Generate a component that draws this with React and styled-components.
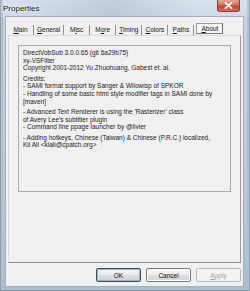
import React from 'react'
import styled, { createGlobalStyle } from 'styled-components';

const GlobalStyle = createGlobalStyle`
  body {
    margin: 0;
    font-family: "Liberation Sans", Arial, sans-serif;
  }
`

const tabs = [
	{ label: 'Main', key: 'M', rest: 'ain' },
	{ label: 'General', key: 'G', rest: 'eneral' },
	{ label: 'Misc', pre: 'M', key: 'i', rest: 'sc' },
	{ label: 'More', pre: 'M', key: 'o', rest: 're' },
	{ label: 'Timing', key: 'T', rest: 'iming' },
	{ label: 'Colors', key: 'C', rest: 'olors' },
	{ label: 'Paths', key: 'P', rest: 'aths' },
	{ label: 'About', key: 'A', rest: 'bout', active: true },
]

const paragraphs = [
	['DirectVobSub 3.0.0.65 (git 6a29b75)', 'xy-VSFilter', 'Copyright 2001-2012 Yu Zhuohuang, Gabest et. al.'],
	['Credits:', '- SAMI format support by Sanger & Wilowisp of SPKOR', '- Handling of some basic html style modifier tags in SAMI done by', '[maven]'],
	['- Advanced Text Renderer is using the \'Rasterizer\' class', 'of Avery Lee\'s subtitler plugin', '- Command line ppage launcher by @livier'],
	['- Adding hotkeys, Chinese (Taiwan) & Chinese (P.R.C.) localized,', 'Kii Ali <kiali@cpatch.org>'],
]

const Properties = () => {
	return (
		<Window>
			<GlobalStyle />
			<TitleBar>
				<Title>Properties</Title>
				<CloseButton>
					<svg width="9" height="7" viewBox="0 0 9 7">
						<path d="M1.5 0.8 L7.5 6.2 M7.5 0.8 L1.5 6.2" stroke="#fff" strokeWidth="1.8" strokeLinecap="round" />
					</svg>
				</CloseButton>
			</TitleBar>
			<Client>
				<TabRow>
					{tabs.map(t => (
						<Tab key={t.label} $active={t.active}>
							{t.pre}<u>{t.key}</u>{t.rest}
						</Tab>
					))}
				</TabRow>
				<Panel>
					<InfoBox>
						{paragraphs.map((lines, i) => (
							<Paragraph key={i}>
								{lines.map(l => <Line key={l}>{l}</Line>)}
							</Paragraph>
						))}
					</InfoBox>
				</Panel>
				<ButtonRow>
					<Button $default>OK</Button>
					<Button>Cancel</Button>
					<Button disabled><u>A</u>pply</Button>
				</ButtonRow>
			</Client>
		</Window>
	)
}

const Window = styled.div`
	width: 250px;
	height: 291px;
	box-sizing: border-box;
	display: flex;
	flex-direction: column;
	background: linear-gradient(180deg, #d3dfeb 0%, #c4d3e2 8%, #bccbdb 60%, #a9bdd0 100%);
	box-shadow: inset 1px 0 0 #8e9fb0, inset -1px 0 0 #8e9fb0, inset 0 -1px 0 #7d90a4, inset 3px 0 0 #b1c0ce, inset -3px 0 0 #b1c0ce;
`

const TitleBar = styled.div`
	height: 17px;
	display: flex;
	justify-content: space-between;
	align-items: flex-start;
	background: linear-gradient(90deg, rgba(255,255,255,0.15), rgba(140,160,180,0.25) 45%, rgba(255,255,255,0.1) 80%);
`

const Title = styled.div`
	padding: 4px 0 0 3px;
	font-size: 8px;
	line-height: 10px;
	color: #111;
	text-shadow: 0 0 4px #fff, 0 0 2px #fff;
`

const CloseButton = styled.div`
	width: 23px;
	height: 12px;
	margin-right: 10px;
	box-sizing: border-box;
	display: flex;
	align-items: center;
	justify-content: center;
	border: 1px solid #8a3b32;
	border-top: none;
	border-radius: 0 0 3px 3px;
	background: linear-gradient(180deg, #e5a593 0%, #d4705e 45%, #c1412f 55%, #d2725c 100%);
`

const Client = styled.div`
	flex: 1;
	margin: 0 7px 5px 6px;
	padding: 6px 2px 0 2px;
	background: #f0f0f0;
	display: flex;
	flex-direction: column;
	box-shadow: 0 0 0 1px #a2b1c0;
`

const TabRow = styled.div`
	height: 12px;
	display: flex;
	align-items: flex-end;
`

const Tab = styled.div`
	min-width: ${p => p.$active ? 27 : 26}px;
	box-sizing: border-box;
	height: ${p => p.$active ? 11 : 10}px;
	margin-left: ${p => p.$active ? 2 : 0}px;
	margin-bottom: ${p => p.$active ? 1 : 0}px;
	padding: 0 3px;
	font-size: 6.5px;
	line-height: ${p => p.$active ? 9 : 10}px;
	text-align: center;
	color: #111;
	white-space: nowrap;
	border-right: 1px solid #8d8d8d;
	${p => p.$active && `
		border: 1px solid #9a9a9a;
		border-right-color: #6e6e6e;
		border-bottom-color: #7a7a7a;
		background: #f7f7f7;
	`}
`

const Panel = styled.div`
	height: 228px;
	box-sizing: border-box;
	padding: 9px 9px 0 9px;
	border: 1px solid #dadada;
	border-right-color: #9c9c9c;
	border-bottom-color: #8e8e8e;
	background: #f1f1f1;
`

const InfoBox = styled.div`
	height: 147px;
	box-sizing: border-box;
	padding: 3px 4px;
	border: 1px solid #ababab;
	background: #f0f0f0;
	font-size: 6.5px;
	line-height: 7.7px;
	color: #1a1a1a;
`

const Paragraph = styled.div`
	margin-bottom: 2.5px;
`

const Line = styled.div`
	white-space: nowrap;
`

const ButtonRow = styled.div`
	display: flex;
	justify-content: flex-end;
	gap: 5px;
	margin-top: 5px;
`

const Button = styled.button`
	width: 45px;
	height: 14px;
	padding: 0;
	box-sizing: border-box;
	font-family: "Liberation Sans", Arial, sans-serif;
	font-size: 6.5px;
	color: #111;
	border: 1px solid ${p => p.$default ? '#4a4a4a' : '#7a7a7a'};
	border-radius: 2px;
	background: linear-gradient(180deg, #f6f6f6 0%, #ebebeb 50%, #dddddd 51%, #d4d4d4 100%);
	box-shadow: ${p => p.$default ? 'inset 0 0 0 1px #8fb6d6' : 'inset 0 0 0 1px #fafafa'};
	&:disabled {
		color: #a3a3a3;
		border-color: #b8b8b8;
		background: #f3f3f3;
		box-shadow: none;
	}
`

export default Properties
